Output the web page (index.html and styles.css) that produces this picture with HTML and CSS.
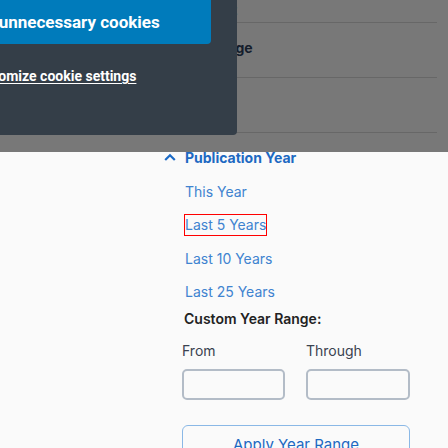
FILE: index.html
```html
<!DOCTYPE html>
<html lang="en">
<head>
<meta charset="utf-8">
<link rel="stylesheet" href="styles.css">
</head>
<body>
<div class="page">
  <aside class="facets">
    <div class="facet facet-top"><span class="facet-title closed">Subject</span></div>
    <div class="facet"><span class="facet-title closed">Language</span></div>
    <div class="facet"><span class="facet-title closed">Format</span></div>
    <section class="facet facet-open">
      <div class="facet-head">
        <svg class="chev" width="12" height="8" viewBox="0 0 12 8"><path d="M1.2 7 L6 2.2 L10.8 7" fill="none" stroke="#1b6ac6" stroke-width="2.2"/></svg>
        <span class="facet-title">Publication Year</span>
      </div>
      <ul class="years">
        <li><a class="year">This Year</a></li>
        <li><a class="year focus">Last 5 Years</a></li>
        <li><a class="year">Last 10 Years</a></li>
        <li><a class="year">Last 25 Years</a></li>
      </ul>
      <div class="custom-title">Custom Year Range:</div>
      <div class="range">
        <label class="field"><span class="field-label">From</span><input class="field-input" type="text"></label>
        <label class="field"><span class="field-label">Through</span><input class="field-input" type="text"></label>
      </div>
      <button class="apply">Apply Year Range</button>
    </section>
  </aside>
</div>
<div class="backdrop"></div>
<div class="cookie">
  <button class="cookie-btn">Reject unnecessary cookies</button>
  <a class="cookie-link">Customize cookie settings</a>
</div>
</body>
</html>
```
FILE: styles.css
```css
* { box-sizing: border-box; }
html, body { margin: 0; padding: 0; }
body {
  background: #fafafa;
  font-family: Inter, "Noto Sans", sans-serif;
  font-size: 14px;
  color: #222;
  width: 448px;
  height: 448px;
  overflow: hidden;
  position: relative;
}
.page {
  display: flex;
  justify-content: flex-end;
  padding-right: 11px;
}
.facets {
  width: 277px;
  display: flex;
  flex-direction: column;
}
.facet {
  border-top: 1px solid #d8d8d8;
  padding: 15px 0 19px 25px;
  line-height: 20px;
}
.facet-top {
  border-top: none;
  height: 22px;
  padding: 0 0 0 25px;
  overflow: hidden;
}
.facet-title {
  font-weight: 700;
  color: #1d69c2;
  font-size: 14px;
}
.facet-title.closed { color: #2c3f5c; }
.facet-open {
  padding: 15px 27px 0 0;
}
.facet-head {
  display: flex;
  align-items: center;
  line-height: 20px;
}
.chev { margin-left: 4px; margin-right: 9px; margin-top: -3px; }
.years {
  list-style: none;
  margin: 14px 0 0 0;
  padding: 0 0 0 25px;
  display: flex;
  flex-direction: column;
  gap: 13.33px;
}
.year {
  display: inline-block;
  line-height: 20px;
  color: #4083d0;
  font-size: 14px;
}
.focus { outline: 1px solid #ff0000; }
.custom-title {
  margin: 7px 0 0 24px;
  font-weight: 600;
  font-size: 14px;
  line-height: 20px;
  color: #222;
}
.range {
  margin: 12px 0 0 22px;
  display: grid;
  grid-template-columns: 103px 104px;
  column-gap: 21px;
}
.field { display: flex; flex-direction: column; }
.field-label {
  line-height: 20px;
  color: #3a4250;
  font-size: 14px;
}
.field-input {
  margin-top: 8px;
  height: 31px;
  border: 2px solid #b3bcc7;
  border-radius: 5px;
  background: #fafafa;
  width: 100%;
}
.apply {
  margin: 25px 0 0 22px;
  width: 228px;
  height: 40px;
  background: #fafafa;
  border: 1px solid #8ab8e6;
  border-radius: 6px;
  color: #1d69c2;
  font-family: Inter, sans-serif;
  font-size: 15px;
  padding: 0;
  line-height: 33px;
}
.backdrop {
  position: absolute;
  left: 0; top: 0;
  width: 448px;
  height: 152px;
  background: rgba(0,0,0,0.52);
}
.cookie {
  position: absolute;
  left: -131px;
  top: 0;
  width: 368px;
  height: 135px;
  background: #343e48;
  border-bottom-right-radius: 4px;
  padding: 0 26px;
  display: flex;
  flex-direction: column;
  align-items: center;
}
.cookie-btn {
  width: 100%;
  height: 44px;
  background: #007bbb;
  color: #fff;
  border: none;
  border-radius: 0 0 4px 4px;
  font-family: Roboto, sans-serif;
  font-weight: 700;
  font-size: 17px;
  padding: 0;
}
.cookie-link {
  margin-top: 22px;
  color: #fff;
  font-family: Roboto, sans-serif;
  font-weight: 700;
  font-size: 14px;
  line-height: 20px;
  text-decoration: underline;
  text-underline-offset: 2px;
}
```
